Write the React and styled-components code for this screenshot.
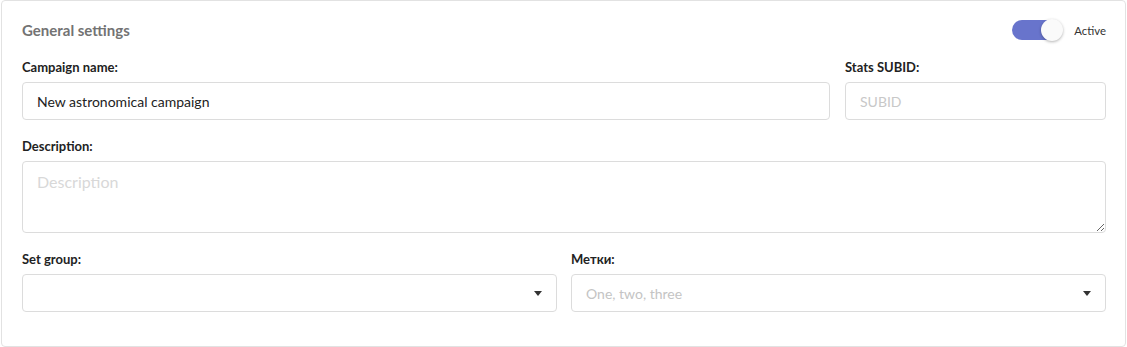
import styled, { createGlobalStyle } from "styled-components";

const GlobalStyle = createGlobalStyle`
    body {
        margin: 0;
        background: #fff;
        font-family: Lato, "Open Sans", sans-serif;
    }
`

const Card = styled.section`
    margin-left: 1px;
    width: 1125px;
    box-sizing: border-box;
    border: 1px solid #e2e2e2;
    border-radius: 4px;
    padding: 17px 19px 34px 20px;
    background: #fff;
`

const Header = styled.div`
    display: flex;
    align-items: center;
    justify-content: space-between;
    height: 24px;
    margin-bottom: 17px;
`

const Title = styled.h2`
    margin: 0;
    font-size: 15px;
    font-weight: 700;
    color: #737373;
`

const SwitchWrap = styled.label`
    display: flex;
    align-items: center;
    gap: 12px;
    font-size: 11.4px;
    color: #333;
`

const Track = styled.span`
    position: relative;
    width: 50px;
    height: 20px;
    border-radius: 10px;
    background: ${(p) => (p.on ? "#6874cc" : "#ccc")};
`

const Knob = styled.span`
    position: absolute;
    top: -1px;
    right: ${(p) => (p.on ? "-1px" : "auto")};
    left: ${(p) => (p.on ? "auto" : "-1px")};
    width: 22px;
    height: 22px;
    border-radius: 50%;
    background: #fafafa;
    box-shadow: 0 1px 3px rgba(0, 0, 0, 0.3);
`

const Row = styled.div`
    display: grid;
    grid-template-columns: ${(p) => p.cols || "1fr"};
    column-gap: ${(p) => p.gap || "14px"};
    margin-bottom: ${(p) => p.mb || "18px"};
`

const Field = styled.div`
    display: flex;
    flex-direction: column;
`

const Label = styled.label`
    font-size: 13px;
    font-weight: 700;
    line-height: 16px;
    color: #222;
    margin-bottom: 7px;
`

const Input = styled.input`
    box-sizing: border-box;
    height: 38px;
    width: 100%;
    border: 1px solid #dcdcdc;
    border-radius: 4px;
    padding: 0 14px;
    font: inherit;
    font-size: 14px;
    color: #222;
    outline: none;

    &::placeholder {
        color: #c8c8c8;
    }
`

const TextArea = styled.textarea`
    box-sizing: border-box;
    height: 72px;
    width: 100%;
    border: 1px solid #dcdcdc;
    border-radius: 4px;
    padding: 10px 14px;
    font: inherit;
    font-size: 16px;
    color: #222;
    outline: none;

    &::placeholder {
        color: #d8d8d8;
    }
`

const SelectBox = styled.div`
    box-sizing: border-box;
    height: 38px;
    display: flex;
    align-items: center;
    justify-content: space-between;
    border: 1px solid #dcdcdc;
    border-radius: 4px;
    padding: 0 14px;
    font-size: 14px;
    color: ${(p) => (p.placeholder ? "#c4c4c4" : "#222")};
`

const Caret = styled.span`
    width: 0;
    height: 0;
    border-left: 4px solid transparent;
    border-right: 4px solid transparent;
    border-top: 5px solid #333;
`

const App = () => {
    return (
        <>
            <GlobalStyle />
            <Card>
                <Header>
                    <Title>General settings</Title>
                    <SwitchWrap>
                        <Track on>
                            <Knob on />
                        </Track>
                        Active
                    </SwitchWrap>
                </Header>
                <Row cols="808px 1fr" gap="15px">
                    <Field>
                        <Label htmlFor="name">Campaign name:</Label>
                        <Input id="name" defaultValue="New astronomical campaign" />
                    </Field>
                    <Field>
                        <Label htmlFor="subid">Stats SUBID:</Label>
                        <Input id="subid" placeholder="SUBID" />
                    </Field>
                </Row>
                <Row mb="18px">
                    <Field>
                        <Label htmlFor="desc">Description:</Label>
                        <TextArea id="desc" placeholder="Description" />
                    </Field>
                </Row>
                <Row cols="535px 1fr" mb="0">
                    <Field>
                        <Label>Set group:</Label>
                        <SelectBox>
                            <span />
                            <Caret />
                        </SelectBox>
                    </Field>
                    <Field>
                        <Label>Метки:</Label>
                        <SelectBox placeholder>
                            <span>One, two, three</span>
                            <Caret />
                        </SelectBox>
                    </Field>
                </Row>
            </Card>
        </>
    )
}

export default App;
